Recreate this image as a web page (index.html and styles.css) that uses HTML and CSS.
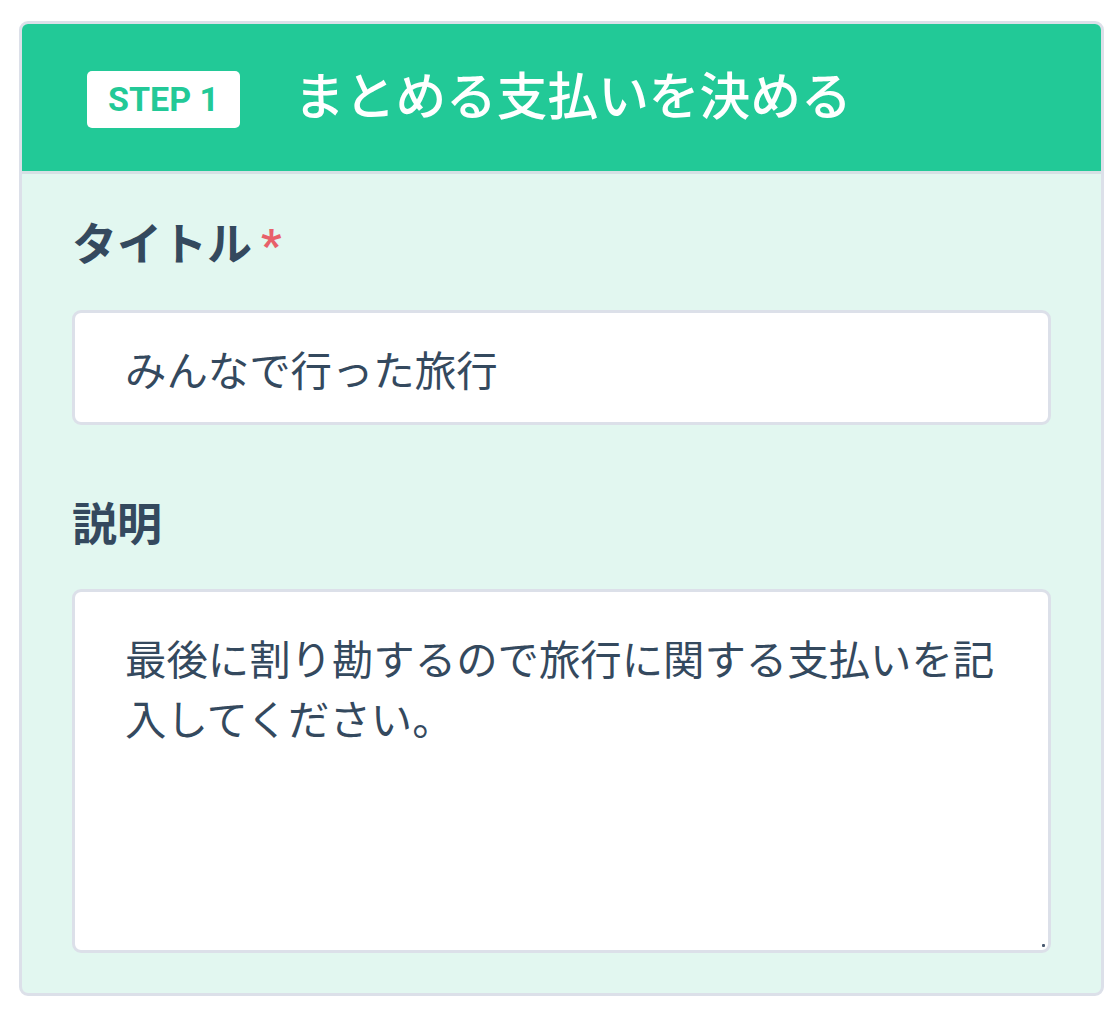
FILE: index.html
```html
<!DOCTYPE html>
<html lang="ja">
<head>
<meta charset="utf-8">
<title>STEP 1</title>
<link rel="stylesheet" href="styles.css">
</head>
<body>
<section class="card">
  <header class="card-header">
    <span class="step-badge">STEP 1</span>
    <h1 class="card-title">まとめる支払いを決める</h1>
  </header>
  <div class="card-body">
    <div class="field">
      <label class="field-label" for="title">タイトル<span class="required">*</span></label>
      <input class="text-input" id="title" type="text" value="みんなで行った旅行">
    </div>
    <div class="field field-last">
      <label class="field-label" for="desc">説明</label>
      <div class="area-wrap">
        <textarea class="text-area" id="desc">最後に割り勘するので旅行に関する支払いを記入してください。</textarea>
        <span class="grip"></span>
      </div>
    </div>
  </div>
</section>
</body>
</html>
```

FILE: styles.css
```css
html, body {
  margin: 0;
  padding: 0;
  background: #ffffff;
}

body {
  padding: 21px 12px 0 19px;
  font-family: "Roboto", "Noto Sans CJK JP", sans-serif;
  color: #34495e;
}

.card {
  width: 1085px;
  box-sizing: border-box;
  border: 3px solid #dce0e9;
  border-radius: 9px;
  background: #e2f7f0;
  overflow: hidden;
}

.card-header {
  height: 150px;
  box-sizing: border-box;
  background: #22c997;
  border-bottom: 3px solid #d6e0e4;
  display: flex;
  align-items: center;
  padding: 3px 0 0 65px;
}

.step-badge {
  display: inline-flex;
  align-items: center;
  justify-content: center;
  width: 153px;
  height: 57px;
  box-sizing: border-box;
  background: #ffffff;
  border-radius: 5px;
  color: #22c997;
  font-family: "Roboto", sans-serif;
  font-weight: 700;
  font-size: 34px;
  line-height: 1;
}

.card-title {
  margin: -12px 0 0 54px;
  font-family: "Noto Sans CJK JP", sans-serif;
  font-weight: 500;
  font-size: 50.7px;
  line-height: 1;
  color: #ffffff;
}

.card-body {
  padding: 38px 50px 40px 50px;
}

.field {
  display: flex;
  flex-direction: column;
  margin-bottom: 67px;
}

.field-last {
  margin-bottom: 0;
}

.field-label {
  font-family: "Noto Sans CJK JP", sans-serif;
  font-weight: 700;
  font-size: 45px;
  line-height: 60px;
  height: 60px;
  margin-bottom: 38px;
  color: #34495e;
}

.field-last .field-label {
  margin-bottom: 37px;
}

.required {
  font-family: "Roboto", sans-serif;
  color: #e8606a;
  margin-left: 9px;
}

.text-input,
.text-area {
  display: block;
  width: 979px;
  box-sizing: border-box;
  margin: 0;
  border: 3px solid #dce0e9;
  border-radius: 9px;
  background: #ffffff;
  font-family: "Noto Sans CJK JP", sans-serif;
  font-size: 41.4px;
  color: #34495e;
  outline: none;
}

.text-input {
  height: 115px;
  padding: 0 50px;
}

.area-wrap {
  position: relative;
  width: 979px;
}

.text-area {
  height: 364px;
  padding: 35px 50px 35px 50px;
  line-height: 60px;
  resize: none;
}

.grip {
  position: absolute;
  right: 6px;
  bottom: 6px;
  width: 3px;
  height: 3px;
  background: #4a5a70;
  border-radius: 1px;
}
```
